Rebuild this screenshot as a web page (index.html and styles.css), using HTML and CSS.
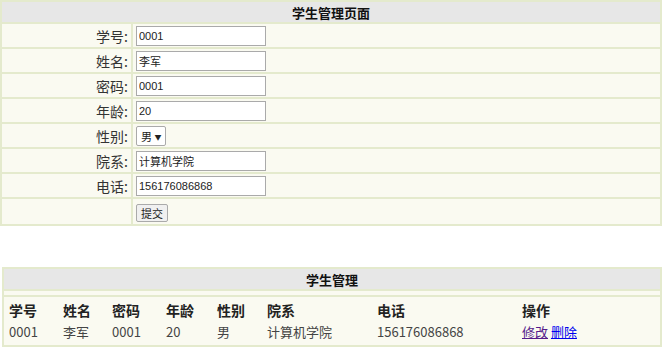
FILE: index.html
```html
<!DOCTYPE html>
<html lang="zh">
<head>
    <meta charset="UTF-8">
    <title>学生管理页面</title>
    <link rel="stylesheet" href="styles.css">
</head>
<body>

<table class="form-table">
    <tr><th colspan="2" class="title">学生管理页面</th></tr>
    <tr><td class="label">学号:</td><td><input type="text" value="0001"></td></tr>
    <tr><td class="label">姓名:</td><td><input type="text" value="李军"></td></tr>
    <tr><td class="label">密码:</td><td><input type="text" value="0001"></td></tr>
    <tr><td class="label">年龄:</td><td><input type="text" value="20"></td></tr>
    <tr><td class="label">性别:</td><td><span class="select">男 <span class="arrow">&#9660;</span></span></td></tr>
    <tr><td class="label">院系:</td><td><input type="text" value="计算机学院"></td></tr>
    <tr><td class="label">电话:</td><td><input type="text" value="156176086868"></td></tr>
    <tr class="submit-row"><td class="label"></td><td><button>提交</button></td></tr>
</table>

<table class="list-table">
    <tr><th colspan="8" class="title">学生管理</th></tr>
    <tr class="spacer"><td colspan="8"></td></tr>
    <tr class="head">
        <td class="c1">学号</td><td class="c2">姓名</td><td class="c3">密码</td><td class="c4">年龄</td>
        <td class="c5">性别</td><td class="c6">院系</td><td class="c7">电话</td><td>操作</td>
    </tr>
    <tr class="row">
        <td>0001</td><td>李军</td><td>0001</td><td>20</td>
        <td>男</td><td>计算机学院</td><td>156176086868</td>
        <td><a href="#" class="visited">修改</a> <a href="#">删除</a></td>
    </tr>
</table>

</body>
</html>
```

FILE: styles.css
```css
body {
    margin: 0;
    font-family: "Noto Sans CJK SC", "Liberation Sans", sans-serif;
    font-size: 13px;
    color: #333;
    background-color: #fff;
}
.form-table {
    width: 100%;
    border-collapse: collapse;
    background-color: #fafaf1;
}
.form-table td, .form-table th {
    border: 2px solid #e4eacd;
    padding: 0;
    height: 23px;
}
.form-table .title {
    height: 20px;
}
.form-table .submit-row td {
    height: 25px;
}
.title {
    background-color: #e7e7e7;
    color: #111;
    font-weight: bold;
    font-size: 13px;
    text-align: center;
}
.form-table .label {
    width: 126px;
    text-align: right;
    padding-right: 3px;
    font-size: 14px;
    color: #333;
}
.form-table td:last-child {
    padding-left: 3px;
}
.form-table input {
    width: 124px;
    height: 18px;
    margin: 0;
    padding: 0 2px;
    border: 1px solid #aaa;
    font-family: "Liberation Sans", "Noto Sans CJK SC", sans-serif;
    font-size: 11px;
    color: #222;
    background: #fff;
    vertical-align: middle;
}
.select {
    display: inline-block;
    border: 1px solid #aaa;
    background: #fff;
    border-radius: 2px;
    padding: 0 4px;
    height: 18px;
    line-height: 18px;
    font-size: 11px;
    color: #222;
    vertical-align: middle;
}
.select .arrow {
    font-size: 7px;
    vertical-align: 1px;
}
.form-table button {
    font-family: "Noto Sans CJK SC", sans-serif;
    font-size: 11px;
    height: 18px;
    padding: 0 4px;
    border: 1px solid #aaa;
    border-radius: 2px;
    background: #f0f0f0;
    color: #222;
    vertical-align: middle;
}
.list-table {
    margin: 41px 0 0 2px;
    width: calc(100% - 2px);
    border-collapse: collapse;
    background-color: #fafaf1;
    border: 2px solid #e4eacd;
}
.list-table .title {
    height: 20px;
    padding: 0;
    border-bottom: 2px solid #e4eacd;
}
.list-table .spacer td {
    height: 4px;
    padding: 0;
    border-bottom: 2px solid #e4eacd;
}
.list-table td {
    padding: 0 0 0 5px;
    text-align: left;
}
.list-table .head td {
    font-weight: bold;
    font-size: 14px;
    color: #222;
    padding-top: 3px;
    height: 19px;
}
.list-table .row td {
    font-size: 13px;
    color: #444;
    height: 22px;
    padding-bottom: 3px;
}
.c1 { width: 49px; }
.c2 { width: 44px; }
.c3 { width: 49px; }
.c4 { width: 46px; }
.c5 { width: 45px; }
.c6 { width: 105px; }
.c7 { width: 140px; }
.list-table a {
    color: #00e;
}
.list-table a.visited {
    color: #551a8b;
}
```
